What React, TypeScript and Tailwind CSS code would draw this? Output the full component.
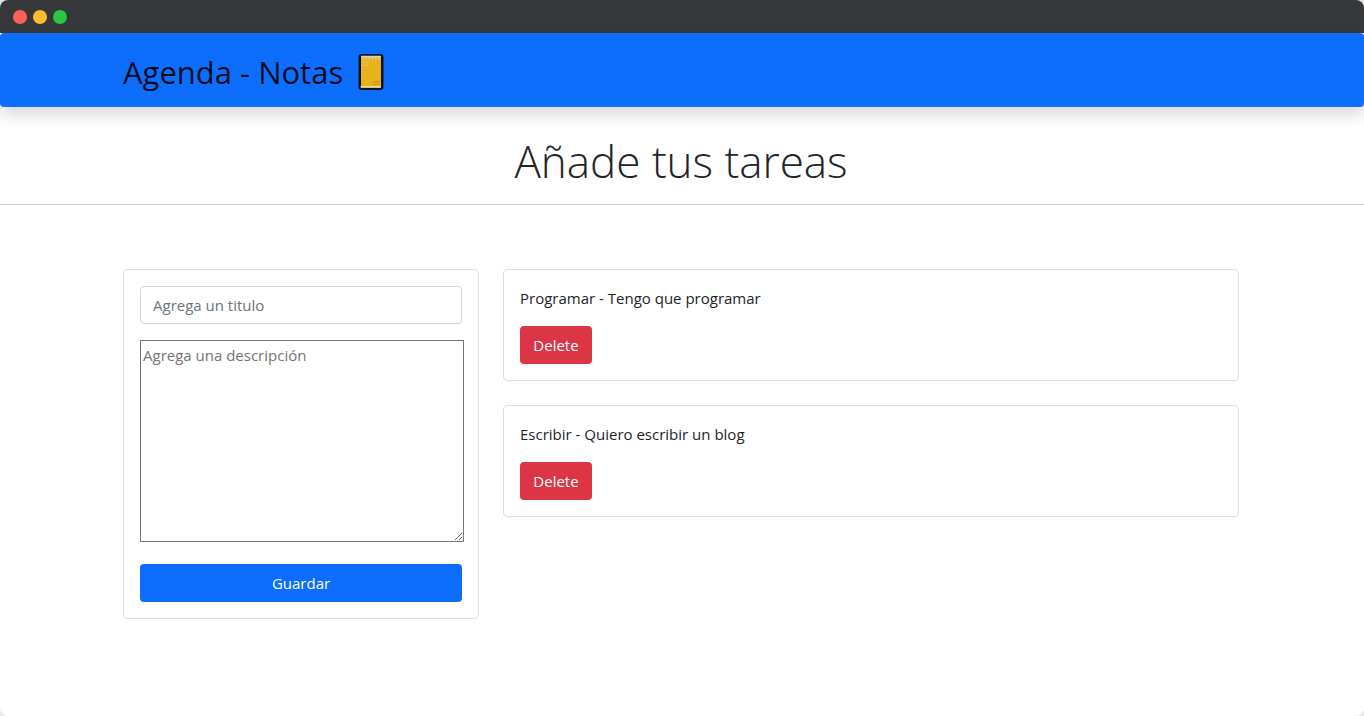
import { useState } from "react";
import type { FormEvent } from "react";

type Task = { id: number; title: string; description: string };

const initialTasks: Task[] = [
  { id: 1, title: "Programar", description: "Tengo que programar" },
  { id: 2, title: "Escribir", description: "Quiero escribir un blog" },
];

function NotebookIcon() {
  return (
    <svg className="h-10 w-7" viewBox="0 0 28 40" aria-hidden="true">
      <rect x="1.5" y="2" width="25" height="36" rx="3" fill="#0b1423" />
      <rect x="4" y="5" width="20" height="31" rx="0.5" fill="#e8b21c" />
      <rect x="3.5" y="34" width="20" height="1.4" fill="#d9dcc8" />
      <g fill="#efbd48">
        <rect x="4.5" y="9.5" width="7" height="1.7" />
        <rect x="4.5" y="12.5" width="7" height="1.7" />
      </g>
      <g fill="#cf951c">
        <rect x="16" y="29" width="7" height="1.5" />
        <rect x="16" y="31.7" width="7" height="1.3" />
      </g>
      <path
        d="M4 4.5h20M5 4.5l1.5 3M8.2 4.5l1.5 3M11.4 4.5l1.5 3M14.6 4.5l1.5 3M17.8 4.5l1.5 3M21 4.5l1.5 3"
        fill="none"
        stroke="#d3d4c6"
        strokeWidth="1.3"
      />
    </svg>
  );
}

function WindowBar() {
  return (
    <div className="flex h-[33px] items-center gap-1.5 bg-[#37383a] px-[13px] pt-px">
      <span className="size-3.5 rounded-full bg-[#ff5f57]" />
      <span className="size-3.5 rounded-full bg-[#febc2e]" />
      <span className="size-3.5 rounded-full bg-[#28c840]" />
    </div>
  );
}

export default function App() {
  const [tasks, setTasks] = useState(initialTasks);
  const [title, setTitle] = useState("");
  const [description, setDescription] = useState("");

  function save(event: FormEvent) {
    event.preventDefault();
    setTasks([...tasks, { id: Date.now(), title, description }]);
    setTitle("");
    setDescription("");
  }

  return (
    <div className="min-h-screen bg-[#e4e4e4] font-['Open_Sans','Noto_Sans',sans-serif] text-[15px] leading-6 text-[#212529]">
      <div className="min-h-screen overflow-hidden rounded-lg bg-white">
        <WindowBar />
        <nav className="rounded bg-[#0d6efd] pt-3.5 pr-0.5 pb-2.5 shadow-[0_8px_16px_rgba(0,0,0,0.15)]">
          <div className="mx-auto flex max-w-[1140px] items-center gap-3.5 px-3">
            <a href="#" className="text-[31px] leading-[50px] text-black/90">
              Agenda - Notas
            </a>
            <NotebookIcon />
          </div>
        </nav>

        <h1 className="pt-6 pr-0.5 pb-3 text-center text-[44px] leading-[61px] font-light">
          Añade tus tareas
        </h1>
        <hr className="border-[#c8c9ca]" />

        <main className="pt-16 pr-0.5 pb-16">
          <div className="mx-auto grid max-w-[1140px] grid-cols-12 items-start gap-x-6 px-3">
            <form
              onSubmit={save}
              className="col-span-4 rounded border border-[#dfdfdf] p-4"
            >
              <input
                type="text"
                aria-label="Título"
                placeholder="Agrega un titulo"
                value={title}
                onChange={(event) => setTitle(event.target.value)}
                className="block h-[38px] w-full rounded border border-[#ced4da] px-3 placeholder:text-[#6c757d]"
              />
              <textarea
                aria-label="Descripción"
                placeholder="Agrega una descripción"
                value={description}
                onChange={(event) => setDescription(event.target.value)}
                className="mt-4 block h-[202px] w-[calc(100%+2px)] border border-[#767676] p-0.5 placeholder:text-[#757575]"
              />
              <button
                type="submit"
                className="mt-[22px] block h-[38px] w-full rounded bg-[#0d6efd] text-white"
              >
                Guardar
              </button>
            </form>

            <ul className="col-span-8 flex flex-col gap-6">
              {tasks.map((task) => (
                <li key={task.id} className="rounded border border-[#dfdfdf] p-4">
                  <p>
                    {task.title} - {task.description}
                  </p>
                  <button
                    type="button"
                    onClick={() => setTasks(tasks.filter((item) => item.id !== task.id))}
                    className="mt-4 block h-[38px] w-[72px] rounded bg-[#dc3545] text-white"
                  >
                    Delete
                  </button>
                </li>
              ))}
            </ul>
          </div>
        </main>
      </div>
    </div>
  );
}
